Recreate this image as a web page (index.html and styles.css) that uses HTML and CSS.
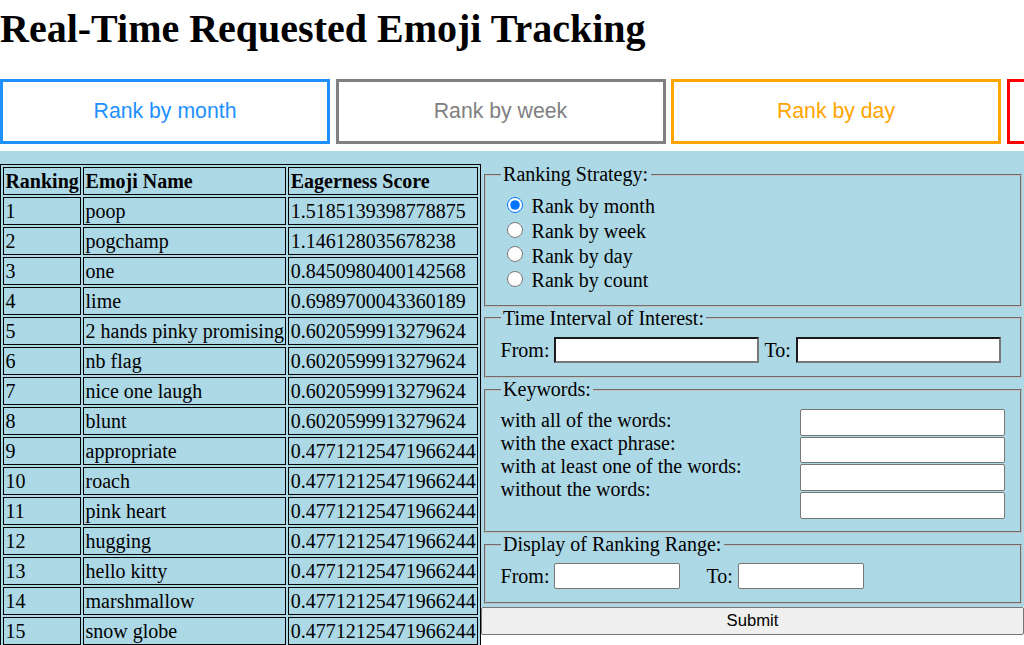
FILE: index.html
```html
<!DOCTYPE html>
<html>
<head>
<meta charset="utf-8">
<title>Real-Time Requested Emoji Tracking</title>
<link rel="stylesheet" href="styles.css">
</head>
<body>
<h1 class="title">Real-Time Requested Emoji Tracking</h1>
<div class="tabs">
  <button class="tab tab-month">Rank by month</button>
  <button class="tab tab-week">Rank by week</button>
  <button class="tab tab-day">Rank by day</button>
  <button class="tab tab-count">Rank by count</button>
</div>
<div class="main">
  <div class="board">
    <table class="rank">
      <tr><th>Ranking</th><th>Emoji Name</th><th>Eagerness Score</th></tr>
      <tr><td>1</td><td>poop</td><td>1.5185139398778875</td></tr>
      <tr><td>2</td><td>pogchamp</td><td>1.146128035678238</td></tr>
      <tr><td>3</td><td>one</td><td>0.8450980400142568</td></tr>
      <tr><td>4</td><td>lime</td><td>0.6989700043360189</td></tr>
      <tr><td>5</td><td>2 hands pinky promising</td><td>0.6020599913279624</td></tr>
      <tr><td>6</td><td>nb flag</td><td>0.6020599913279624</td></tr>
      <tr><td>7</td><td>nice one laugh</td><td>0.6020599913279624</td></tr>
      <tr><td>8</td><td>blunt</td><td>0.6020599913279624</td></tr>
      <tr><td>9</td><td>appropriate</td><td>0.47712125471966244</td></tr>
      <tr><td>10</td><td>roach</td><td>0.47712125471966244</td></tr>
      <tr><td>11</td><td>pink heart</td><td>0.47712125471966244</td></tr>
      <tr><td>12</td><td>hugging</td><td>0.47712125471966244</td></tr>
      <tr><td>13</td><td>hello kitty</td><td>0.47712125471966244</td></tr>
      <tr><td>14</td><td>marshmallow</td><td>0.47712125471966244</td></tr>
      <tr><td>15</td><td>snow globe</td><td>0.47712125471966244</td></tr>
    </table>
  </div>
  <form class="side">
    <div class="panel">
      <fieldset class="group">
        <legend class="legend">Ranking Strategy:</legend>
        <label class="opt"><input class="radio" type="radio" name="strategy" checked> Rank by month</label>
        <label class="opt"><input class="radio" type="radio" name="strategy"> Rank by week</label>
        <label class="opt"><input class="radio" type="radio" name="strategy"> Rank by day</label>
        <label class="opt"><input class="radio" type="radio" name="strategy"> Rank by count</label>
      </fieldset>
      <fieldset class="group">
        <legend class="legend">Time Interval of Interest:</legend>
        <div class="row row-time">
          <span>From:</span><input class="field field-time" type="text">
          <span>To:</span><input class="field field-time" type="text">
        </div>
      </fieldset>
      <fieldset class="group">
        <legend class="legend">Keywords:</legend>
        <div class="keywords">
          <div class="kw-labels">
            <div>with all of the words:</div>
            <div>with the exact phrase:</div>
            <div>with at least one of the words:</div>
            <div>without the words:</div>
          </div>
          <div class="kw-inputs">
            <input class="field field-kw" type="text">
            <input class="field field-kw" type="text">
            <input class="field field-kw" type="text">
            <input class="field field-kw" type="text">
          </div>
        </div>
      </fieldset>
      <fieldset class="group">
        <legend class="legend">Display of Ranking Range:</legend>
        <div class="row row-range">
          <span>From:</span><input class="field field-range" type="text">
          <span class="to-gap">To:</span><input class="field field-range" type="text">
        </div>
      </fieldset>
    </div>
    <button class="submit" type="submit">Submit</button>
  </form>
</div>
</body>
</html>
```

FILE: styles.css
```css
html {
  overflow: hidden;
}

body {
  margin: 0;
  font-family: "Liberation Serif", "Times New Roman", serif;
  font-size: 20px;
  color: #000;
  background: #fff;
}

.title {
  font-size: 40px;
  font-weight: bold;
  line-height: 46px;
  margin: 5.5px 0 27.5px;
}

.tabs {
  display: flex;
  gap: 5.5px;
  white-space: nowrap;
}

.tab {
  flex: 0 0 330px;
  height: 65px;
  background: #fff;
  border: 3px solid;
  font-family: "Liberation Sans", Arial, sans-serif;
  font-size: 21.25px;
  padding: 0;
  cursor: pointer;
}

.tab-month { color: #1e90ff; border-color: #1e90ff; }
.tab-week { color: #808080; border-color: #808080; }
.tab-day { color: #ffa500; border-color: #ffa500; }
.tab-count { color: #ff0000; border-color: #ff0000; }

.main {
  display: flex;
  align-items: flex-start;
  margin-top: 7px;
}

.board {
  background: #add8e6;
  padding-top: 13px;
  flex: 0 0 auto;
}

.rank {
  border: 1px solid #000;
  border-spacing: 2.5px;
  background: #add8e6;
  font-size: 20px;
}

.rank th,
.rank td {
  border: 1px solid #000;
  padding: 1.5px 1.4px;
  text-align: left;
  line-height: 23px;
  white-space: nowrap;
}

.rank th {
  font-weight: bold;
}

.side {
  flex: 1 1 auto;
  margin: 0;
  min-width: 0;
}

.panel {
  background: #add8e6;
  padding: 12px 0 3px;
}

.group {
  margin: 0 2.5px;
  border: 2px groove #c0c0c0;
  padding: 7px 15px 12.5px;
  min-width: 0;
}

.legend {
  padding: 0 2.5px;
  line-height: 23px;
}

.opt {
  display: block;
  line-height: 23px;
}

.radio {
  width: 16px;
  height: 16px;
  margin: 3.75px 3.75px 0 6.25px;
  vertical-align: baseline;
}

.row {
  display: flex;
  align-items: center;
  gap: 5px;
  white-space: nowrap;
  line-height: 23px;
}

.row-time {
  min-height: 27px;
}

.row-range {
  min-height: 26px;
}

.field {
  box-sizing: border-box;
  height: 26px;
  font-family: "Liberation Sans", Arial, sans-serif;
  font-size: 16.67px;
  padding: 1px 2.5px;
  margin: 0;
  background: #fff;
  border: 1px solid #767676;
  border-radius: 2px;
}

.field-time {
  width: 205px;
  border: 2px solid;
  border-color: #1a1a1a #777 #777 #1a1a1a;
  border-radius: 0;
}

.field-range {
  width: 126px;
}

.to-gap {
  margin-left: 21px;
}

.keywords {
  display: flex;
  justify-content: space-between;
}

.kw-labels {
  line-height: 23px;
  padding-top: 1px;
}

.kw-inputs {
  display: flex;
  flex-direction: column;
  gap: 1.2px;
  margin-top: 1px;
}

.field-kw {
  width: 205px;
  height: 26.5px;
}

.submit {
  display: block;
  width: 100%;
  height: 28px;
  margin: 0;
  padding: 0;
  background: #efefef;
  border: 1px solid #767676;
  border-radius: 2px;
  font-family: "Liberation Sans", Arial, sans-serif;
  font-size: 16.67px;
  color: #000;
}
```
